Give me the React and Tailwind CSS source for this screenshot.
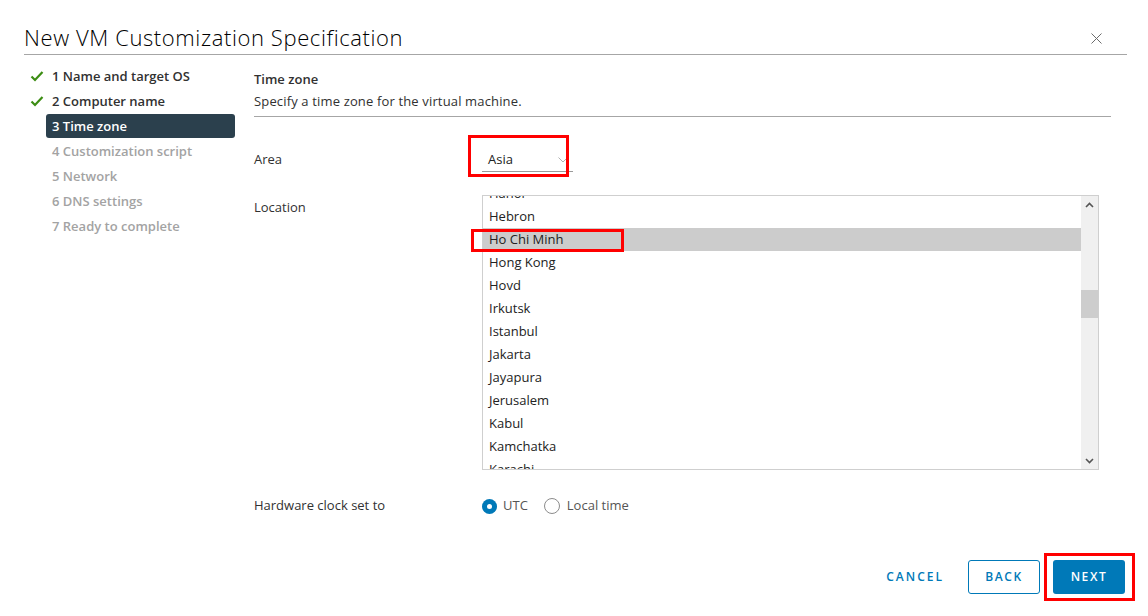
import React from 'react';

const steps = [
  { label: '1 Name and target OS', state: 'done' },
  { label: '2 Computer name', state: 'done' },
  { label: '3 Time zone', state: 'active' },
  { label: '4 Customization script', state: 'todo' },
  { label: '5 Network', state: 'todo' },
  { label: '6 DNS settings', state: 'todo' },
  { label: '7 Ready to complete', state: 'todo' },
];

const locations = [
  'Hanoi', 'Hebron', 'Ho Chi Minh', 'Hong Kong', 'Hovd', 'Irkutsk', 'Istanbul',
  'Jakarta', 'Jayapura', 'Jerusalem', 'Kabul', 'Kamchatka', 'Karachi',
];

const Check = () => (
  <svg width="14" height="12" viewBox="0 0 14 12">
    <path d="M1.5 6.5 L5 10 L12.5 2" fill="none" stroke="#3c8d13" strokeWidth="2.2" />
  </svg>
);

const StepItem = ({ label, state }) => (
  <div className="flex items-center h-[24px] mb-[1px]">
    <div className="w-[16px] flex items-center">{state === 'done' && <Check />}</div>
    <div
      className={`w-[189px] h-[24px] flex items-center pl-[6px] pt-[1px] rounded-[3px] text-[13px] font-semibold ${
        state === 'active' ? 'bg-[#2b404d] text-white' : state === 'done' ? 'text-[#313131]' : 'text-[#a3a3a3]'
      }`}
    >
      {label}
    </div>
  </div>
);

export default function App() {
  return (
    <div className="relative w-[1148px] h-[616px] bg-white text-[#313131] font-['Open_Sans','Liberation_Sans',sans-serif]">
      {/* header */}
      <div className="ml-[24px] mr-[21px] pt-[22px] border-b border-[#a6a6a6] h-[55px] flex justify-between">
        <h1 className="text-[22px] leading-[30px] font-light text-black tracking-[0.6px]">New VM Customization Specification</h1>
        <svg width="11" height="11" viewBox="0 0 11 11" className="mt-[11px] mr-[25px]">
          <path d="M0.5 0.5 L10.5 10.5 M10.5 0.5 L0.5 10.5" stroke="#6b6b6b" strokeWidth="1" />
        </svg>
      </div>

      <div className="flex">
        {/* sidebar */}
        <div className="w-[254px] pl-[30px] pt-[9px]">
          {steps.map((s) => (
            <StepItem key={s.label} {...s} />
          ))}
        </div>

        {/* content */}
        <div className="w-[857px] pt-[14px]">
          <div className="border-b border-[#a6a6a6] pb-[5px]">
            <div className="text-[13px] leading-[20px] font-semibold">Time zone</div>
            <div className="text-[13px] leading-[20px] mt-[2px] tracking-[0.15px]">Specify a time zone for the virtual machine.</div>
          </div>

          <div className="flex items-center mt-[31px] h-[24px]">
            <div className="w-[228px] text-[13px]">Area</div>
            <div className="w-[91px] h-[24px] border-b border-[#9a9a9a] flex items-center justify-between pl-[6px] pr-[5px]">
              <span className="text-[13px] text-[#222]">Asia</span>
              <svg width="10" height="6" viewBox="0 0 10 6">
                <path d="M0.5 0.5 L5 5 L9.5 0.5" fill="none" stroke="#b0b0b0" strokeWidth="1" />
              </svg>
            </div>
          </div>

          <div className="flex mt-[23px]">
            <div className="w-[228px] text-[13px] pt-[2px] leading-[20px]">Location</div>
            <div className="w-[617px] h-[275px] border border-[#cfcfcf] flex overflow-hidden">
              <div className="flex-1 overflow-hidden">
                <div className="mt-[-14px]">
                  {locations.map((l) => (
                    <div
                      key={l}
                      className={`h-[23px] flex items-center pl-[6px] text-[13px] text-[#222] ${
                        l === 'Ho Chi Minh' ? 'bg-[#cccccc]' : ''
                      }`}
                    >
                      {l}
                    </div>
                  ))}
                </div>
              </div>
              <div className="w-[17px] bg-[#f0f0f0] flex flex-col">
                <div className="h-[17px] flex items-center justify-center">
                  <svg width="9" height="6" viewBox="0 0 9 6">
                    <path d="M1 5 L4.5 1.5 L8 5" fill="none" stroke="#555" strokeWidth="1.6" />
                  </svg>
                </div>
                <div className="h-[77px]" />
                <div className="h-[28px] bg-[#cdcdcd]" />
                <div className="flex-1" />
                <div className="h-[17px] flex items-center justify-center">
                  <svg width="9" height="6" viewBox="0 0 9 6">
                    <path d="M1 1 L4.5 4.5 L8 1" fill="none" stroke="#555" strokeWidth="1.6" />
                  </svg>
                </div>
              </div>
            </div>
          </div>

          <div className="flex items-center mt-[26px] h-[20px]">
            <div className="w-[228px] text-[13px]">Hardware clock set to</div>
            <div className="flex items-center text-[13px]">
              <span className="w-[15px] h-[15px] rounded-full bg-[#0079b8] flex items-center justify-center">
                <span className="w-[5px] h-[5px] rounded-full bg-white" />
              </span>
              <span className="ml-[6px] text-[#555]">UTC</span>
              <span className="ml-[16px] w-[16px] h-[16px] rounded-full border border-[#8c8c8c] bg-white" />
              <span className="ml-[7px] text-[#555]">Local time</span>
            </div>
          </div>
        </div>
      </div>

      {/* footer */}
      <div className="flex justify-end items-center mt-[44px] mr-[23px] gap-[13px]">
        <button className="h-[34px] px-[8px] mr-[3px] text-[12px] font-semibold tracking-[2px] text-[#0079b8]">CANCEL</button>
        <button className="h-[34px] w-[72px] rounded-[3px] border border-[#0079b8] text-[12px] font-semibold tracking-[1.6px] text-[#0079b8]">BACK</button>
        <button className="h-[34px] w-[72px] rounded-[3px] bg-[#0079b8] text-[12px] font-semibold tracking-[1.6px] text-white">NEXT</button>
      </div>

      {/* annotation boxes */}
      <div className="absolute left-[468px] top-[135px] w-[101px] h-[42px] border-[3px] border-[#ff0000]" />
      <div className="absolute left-[471px] top-[229px] w-[153px] h-[23px] border-[3px] border-[#ff0000]" />
      <div className="absolute left-[1044px] top-[553px] w-[91px] h-[48px] border-[3px] border-[#ff0000]" />
    </div>
  );
}
